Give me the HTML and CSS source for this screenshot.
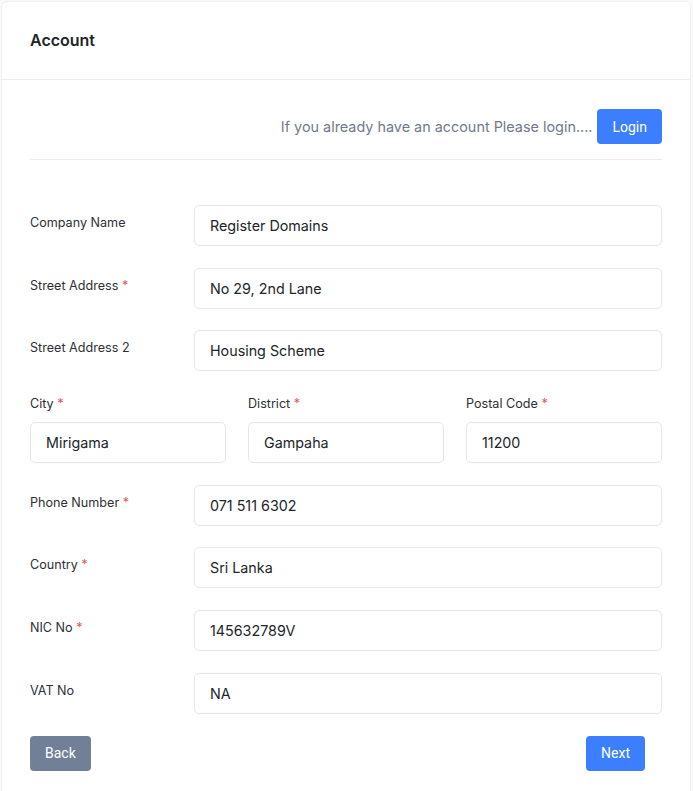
FILE: index.html
```html
<!DOCTYPE html>
<html lang="en">

<head>
    <meta charset="UTF-8">
    <title>Account</title>
    <link rel="stylesheet" href="styles.css">
</head>

<body>
    <div class="card">
        <div class="card-header">
            <h1>Account</h1>
        </div>

        <div class="card-body">
            <div class="login-row">
                <span class="login-text">If you already have an account Please login....</span>
                <button class="btn btn-primary">Login</button>
            </div>
            <hr class="divider">

            <form class="form">
                <div class="form-row">
                    <label>Company Name</label>
                    <div class="field">Register Domains</div>
                </div>
                <div class="form-row">
                    <label>Street Address <span class="req">*</span></label>
                    <div class="field">No 29, 2nd Lane</div>
                </div>
                <div class="form-row">
                    <label>Street Address 2</label>
                    <div class="field">Housing Scheme</div>
                </div>

                <div class="form-grid">
                    <div class="col">
                        <label>City <span class="req">*</span></label>
                        <div class="field">Mirigama</div>
                    </div>
                    <div class="col">
                        <label>District <span class="req">*</span></label>
                        <div class="field">Gampaha</div>
                    </div>
                    <div class="col">
                        <label>Postal Code <span class="req">*</span></label>
                        <div class="field">11200</div>
                    </div>
                </div>

                <div class="form-row">
                    <label>Phone Number <span class="req">*</span></label>
                    <div class="field">071 511 6302</div>
                </div>
                <div class="form-row">
                    <label>Country <span class="req">*</span></label>
                    <div class="field">Sri Lanka</div>
                </div>
                <div class="form-row">
                    <label>NIC No <span class="req">*</span></label>
                    <div class="field">145632789V</div>
                </div>
                <div class="form-row">
                    <label>VAT No</label>
                    <div class="field">NA</div>
                </div>

                <div class="actions">
                    <button type="button" class="btn btn-secondary">Back</button>
                    <button type="button" class="btn btn-primary btn-next">Next</button>
                </div>
            </form>
        </div>
    </div>
</body>

</html>
```

FILE: styles.css
```css
body {
    font-family: Inter, "Noto Sans", sans-serif;
    background-color: #fafafa;
    margin: 0;
    padding: 1px 2px 0 1px;
    color: #212529;
}

.card {
    background-color: #fff;
    border: 1px solid #f0f0f0;
    border-radius: 6px;
    min-height: 800px;
}

.card-header {
    padding: 28px;
    border-bottom: 1px solid #e9ecef;
}

.card-header h1 {
    font-size: 16px;
    font-weight: 600;
    line-height: 21px;
    margin: 0;
}

.card-body {
    padding: 29px 28px 20px;
}

.login-row {
    display: flex;
    justify-content: flex-end;
    align-items: center;
    gap: 5px;
}

.login-text {
    font-size: 14.4px;
    color: #707b88;
}

.divider {
    border: 0;
    border-top: 1px solid #e9ecef;
    margin: 15px 0 45px;
}

.btn {
    font-family: Roboto, sans-serif;
    font-size: 14px;
    font-weight: 400;
    color: #fff;
    border: 0;
    border-radius: 4px;
    height: 35px;
    padding: 0 15px;
}

.btn-primary {
    background-color: #3b7ffe;
}

.btn-secondary {
    background-color: #718096;
}

.form-row {
    display: flex;
    margin-bottom: 21.7px;
}

.form-row label {
    width: 164px;
    flex-shrink: 0;
    line-height: 19px;
    padding-top: 8px;
}

label {
    font-size: 12.6px;
    color: #2d3036;
}

.req {
    color: #e0555f;
}

.field {
    flex: 1;
    height: 41px;
    box-sizing: border-box;
    border: 1px solid #e5e7eb;
    border-radius: 5px;
    padding: 0 15px;
    font-size: 14.3px;
    line-height: 39px;
    color: #212529;
}

.form-grid {
    display: grid;
    grid-template-columns: 1fr 1fr 1fr;
    column-gap: 22px;
    margin-bottom: 21.7px;
}

.form-grid label {
    display: block;
    line-height: 21px;
    margin-bottom: 8px;
}

.actions {
    display: flex;
    justify-content: space-between;
}

.btn-next {
    margin-right: 17px;
}
```
